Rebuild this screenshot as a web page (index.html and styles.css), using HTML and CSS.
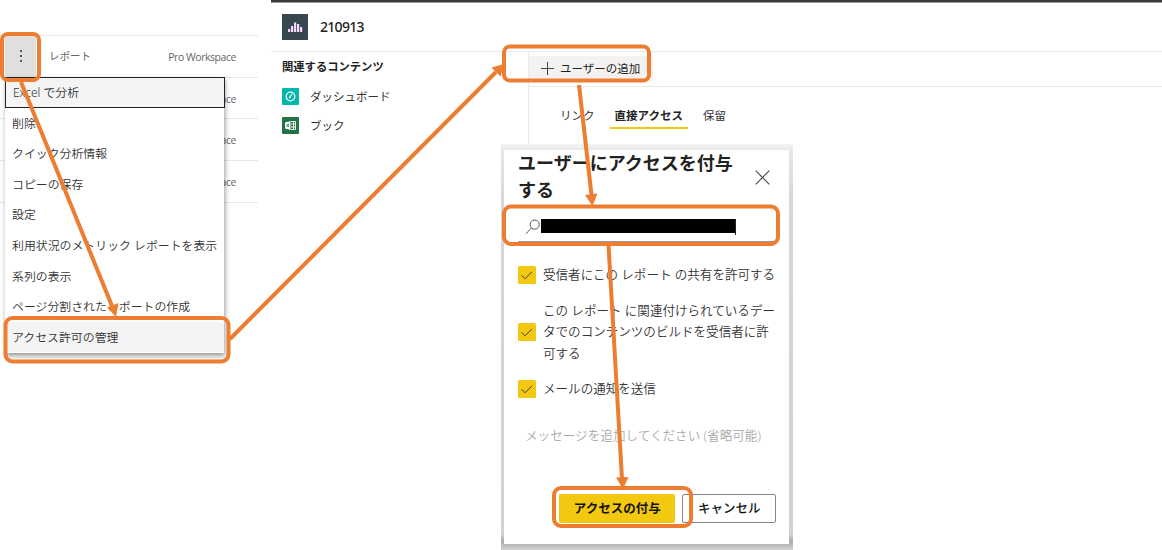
FILE: index.html
```html
<!DOCTYPE html>
<html lang="ja">
<head>
<meta charset="utf-8">
<title>アクセス許可の管理</title>
<link rel="stylesheet" href="styles.css">
</head>
<body>
<div class="stage">
  <section class="list">
    <div class="row first"><span class="more"><svg width="4" height="14" viewBox="0 0 4 14"><circle cx="2" cy="2" r="1"/><circle cx="2" cy="7" r="1"/><circle cx="2" cy="12" r="1"/></svg></span><span class="kind">レポート</span><span class="ws">Pro Workspace</span></div>
    <div class="row"><span class="ws">Pro Workspace</span></div>
    <div class="row"><span class="ws">Pro Workspace</span></div>
    <div class="row"><span class="ws">Pro Workspace</span></div>
    <ul class="menu">
      <li class="focused">Excel で分析</li>
      <li>削除</li>
      <li>クイック分析情報</li>
      <li>コピーの保存</li>
      <li>設定</li>
      <li>利用状況のメトリック レポートを表示</li>
      <li>系列の表示</li>
      <li>ページ分割されたレポートの作成</li>
      <li class="current">アクセス許可の管理</li>
    </ul>
  </section>

  <main class="page">
    <header class="head">
      <svg class="logo" width="26" height="26" viewBox="0 0 26 26"><rect width="26" height="26" fill="#37474f"/><path d="M7.500 18v-3M10.500 18v-6M13.500 18V8.500M16.500 18v-8M19.500 18v-5" stroke="#b565c9" stroke-width="2"/><path d="M7 18v-3M10 18v-6M13 18V8.500M16 18v-8M19 18v-5" stroke="#fff" stroke-width="1.600"/></svg>
      <h1>210913</h1>
    </header>
    <div class="columns">
      <aside class="side">
        <h2>関連するコンテンツ</h2>
        <div class="link"><svg width="17" height="17" viewBox="0 0 17 17"><rect width="17" height="17" rx="1" fill="#01b8aa"/><circle cx="8.500" cy="8.500" r="4.300" fill="none" stroke="#fff" stroke-width="1.300"/><path d="M8 9l2-3" stroke="#fff" stroke-width="1.200"/><circle cx="8" cy="9.300" r="1.100" fill="#fff"/></svg><span>ダッシュボード</span></div>
        <div class="link"><svg width="17" height="17" viewBox="0 0 17 17"><rect width="17" height="17" rx="1" fill="#217346"/><path d="M9 4.500h4.500v8H9M9 7h4.500M9 10h4.500M11.500 4.500v8" stroke="#fff" stroke-width=".9" fill="none"/><path d="M3 5.500l5.500-1.500v9L3 11.500z" fill="#fff"/><path d="M4.700 7l2.200 3M6.900 7l-2.200 3" stroke="#217346" stroke-width=".9"/></svg><span>ブック</span></div>
      </aside>
      <section class="content">
        <div class="toolbar"><button class="add"><svg width="13" height="13" viewBox="0 0 13 13"><path d="M6.500 0v13M0 6.500h13" stroke="#444"/></svg>ユーザーの追加</button></div>
        <nav class="tabs"><span>リンク</span><span class="active">直接アクセス</span><span>保留</span></nav>
      </section>
    </div>
  </main>

  <div class="shade">
    <div class="dialog">
      <div class="title"><h3>ユーザーにアクセスを付与する</h3><svg width="15" height="15" viewBox="0 0 15 15"><path d="M.7.700l13.600 13.600M14.300.700L.7 14.300" stroke="#444" stroke-width="1.100"/></svg></div>
      <div class="search"><svg width="16" height="16" viewBox="0 0 16 16"><circle cx="9.700" cy="5.600" r="4.600" fill="none" stroke="#555"/><path d="M6.400 9L1 14.800" stroke="#555"/></svg><span class="redacted"></span><span class="caret"></span></div>
      <div class="checks">
        <label><svg class="tick" width="18" height="18" viewBox="0 0 18 18"><rect width="18" height="18" rx="1.500" fill="#f2c811"/><path d="M3.500 9.200l3.500 3.600 7-7" fill="none" stroke="#444"/></svg><span>受信者にこの レポート の共有を許可する</span></label>
        <label><svg class="tick" width="18" height="18" viewBox="0 0 18 18"><rect width="18" height="18" rx="1.500" fill="#f2c811"/><path d="M3.500 9.200l3.500 3.600 7-7" fill="none" stroke="#444"/></svg><span>この レポート に関連付けられているデー<br>タでのコンテンツのビルドを受信者に許<br>可する</span></label>
        <label><svg class="tick" width="18" height="18" viewBox="0 0 18 18"><rect width="18" height="18" rx="1.500" fill="#f2c811"/><path d="M3.500 9.200l3.500 3.600 7-7" fill="none" stroke="#444"/></svg><span>メールの通知を送信</span></label>
      </div>
      <div class="message">メッセージを追加してください (省略可能)</div>
      <div class="actions"><button class="primary">アクセスの付与</button><button class="secondary">キャンセル</button></div>
    </div>
  </div>

  <svg class="notes" width="1162" height="550" viewBox="0 0 1162 550">
    <g fill="none" stroke="#ed7d31" stroke-width="4">
      <rect x="2" y="34" width="37" height="46" rx="6"/>
      <rect x="5.500" y="318" width="223" height="43.500" rx="7"/>
      <rect x="504" y="46.500" width="145" height="34" rx="6"/>
      <rect x="504" y="206.500" width="274" height="37.500" rx="7"/>
      <rect x="554" y="488" width="137" height="38" rx="7"/>
      <path d="M21 82L112 306M230 339L496 72M579 85L591.500 195M608.500 245L622 479"/>
    </g>
    <g fill="#ed7d31"><path d="M116 317L107 307.500 118.500 303zM504 64L500.500 76.500 491.500 67.500zM592.500 206L585 195 597.500 193.500zM623 489L616 477.500 628.500 477z"/></g>
  </svg>
</div>
</body>
</html>
```
FILE: styles.css
```css
* { box-sizing: border-box; }
body { margin: 0; background: #fff; font-family: "Noto Sans", "Noto Sans CJK JP", sans-serif; color: #333; }
svg { display: block; flex: none; }
h1, h2, h3, ul { margin: 0; padding: 0; }
button { font: inherit; border: 0; padding: 0; }
.stage { position: relative; width: 1162px; height: 550px; overflow: hidden; display: flex; }

.list { position: relative; width: 271px; padding-top: 35px; }
.row { width: 258px; height: 41.700px; border-top: 1px solid #e8e8e8; display: flex; align-items: center; color: #666; font-size: 10.5px; }
.row:nth-child(4) { height: 42.700px; border-bottom: 1px solid #e8e8e8; }
.more { width: 31px; height: 41px; margin-left: 5px; background: #e1dfdd; display: flex; align-items: center; justify-content: center; fill: #333; }
.kind { margin-left: 13px; font-size: 10.5px; margin-top: -2px; }
.ws { margin-left: auto; margin-right: 22px; padding-top: 1px; font-size: 10.5px; letter-spacing: -.45px; font-family: "Open Sans", sans-serif; }
.menu { position: absolute; left: 5px; top: 77px; width: 219px; height: 276px; background: #fff; box-shadow: 1px 3px 5px rgba(0, 0, 0, .4); list-style: none; }
.menu li { height: 30.6px; padding-left: 7px; line-height: 30.600px; font-size: 11.900px; font-weight: 350; white-space: nowrap; }
.menu .focused { border: 1px solid #222; background: #f4f4f4; padding-left: 7px; line-height: 29px; width: 220px; }
.menu .current { background: #f4f4f4; }

.page { width: 891px; border-top: 2px solid #3b3a39; box-shadow: inset 0 1px #999; }
.head { height: 50px; border-bottom: 1px solid #eaeaea; padding-left: 11px; display: flex; align-items: center; }
.head h1 { margin-left: 12px; font: 500 14px "Noto Sans", sans-serif; color: #222; letter-spacing: -.7px; }
.columns { display: flex; height: 92px; }
.side { width: 257px; padding: 6px 0 0 11px; }
.side h2 { font-size: 11.300px; line-height: 17px; font-weight: 600; color: #222; }
.link { display: flex; align-items: center; gap: 11px; height: 29px; font-size: 11.5px; }
.link span { margin-top: -2px; }
.side h2 + .link { margin-top: 7px; }
.content { flex: 1; border-left: 1px solid #eaeaea; }
.toolbar { height: 35px; border-bottom: 1px solid #eaeaea; padding-top: 4px; }
.add { width: 124px; height: 25px; background: #f3f2f1; display: flex; align-items: center; gap: 6px; padding: 0 0 1px 12px; font-size: 11.5px; color: #222; }
.tabs { display: flex; padding: 15px 0 0 26px; font-size: 11.5px; }
.tabs span { height: 27px; line-height: 27px; padding: 0 5px; margin-right: 10px; white-space: nowrap; }
.tabs .active { font-weight: 700; color: #222; border-bottom: 2px solid #f2c811; }

.shade { position: absolute; left: 501px; top: 144px; width: 292px; height: 406px; padding: 6px 4px 6px 3px; background: linear-gradient(#f4f4f4, #e6e6e6 7px, #d6d6d6 60px, #d2d2d2 390px, #aaa 397px, #d4d4d4); }
.dialog { height: 394px; background: #fff; padding: 0 13px 0 14px; }
.title { display: flex; justify-content: space-between; padding-right: 6px; }
.title h3 { width: 217px; height: 54px; font-size: 18px; line-height: 27px; font-weight: 600; color: #222; }
.title svg { margin-top: 20px; }
.search { height: 28px; margin-top: 10px; border-bottom: 1px solid #999; width: 257px; display: flex; padding: 5px 0 0 7px; }
.redacted { width: 195px; height: 14px; background: #000; }
.caret { width: 1px; height: 16px; margin-left: -1px; background: #222; }
.checks { padding-top: 22px; }
.checks label { display: flex; align-items: center; gap: 7px; font-size: 12.550px; line-height: 21.500px; margin-bottom: 14px; white-space: nowrap; font-weight: 350; }
.message { color: #aaa; font-size: 12.600px; line-height: 18px; font-weight: 350; padding-left: 7px; margin-top: 27px; }
.actions { display: flex; gap: 7px; padding-left: 41px; margin-top: 49px; }
.actions button { height: 29px; padding-bottom: 2px; border-radius: 2px; color: #111; white-space: nowrap; }
.actions .primary { width: 117px; background: #f2c811; font-size: 12.500px; font-weight: 700; }
.actions .secondary { width: 94px; background: #fff; border: 1px solid #888; font-size: 12.500px; font-weight: 500; }
.notes { position: absolute; left: 0; top: 0; }
```
